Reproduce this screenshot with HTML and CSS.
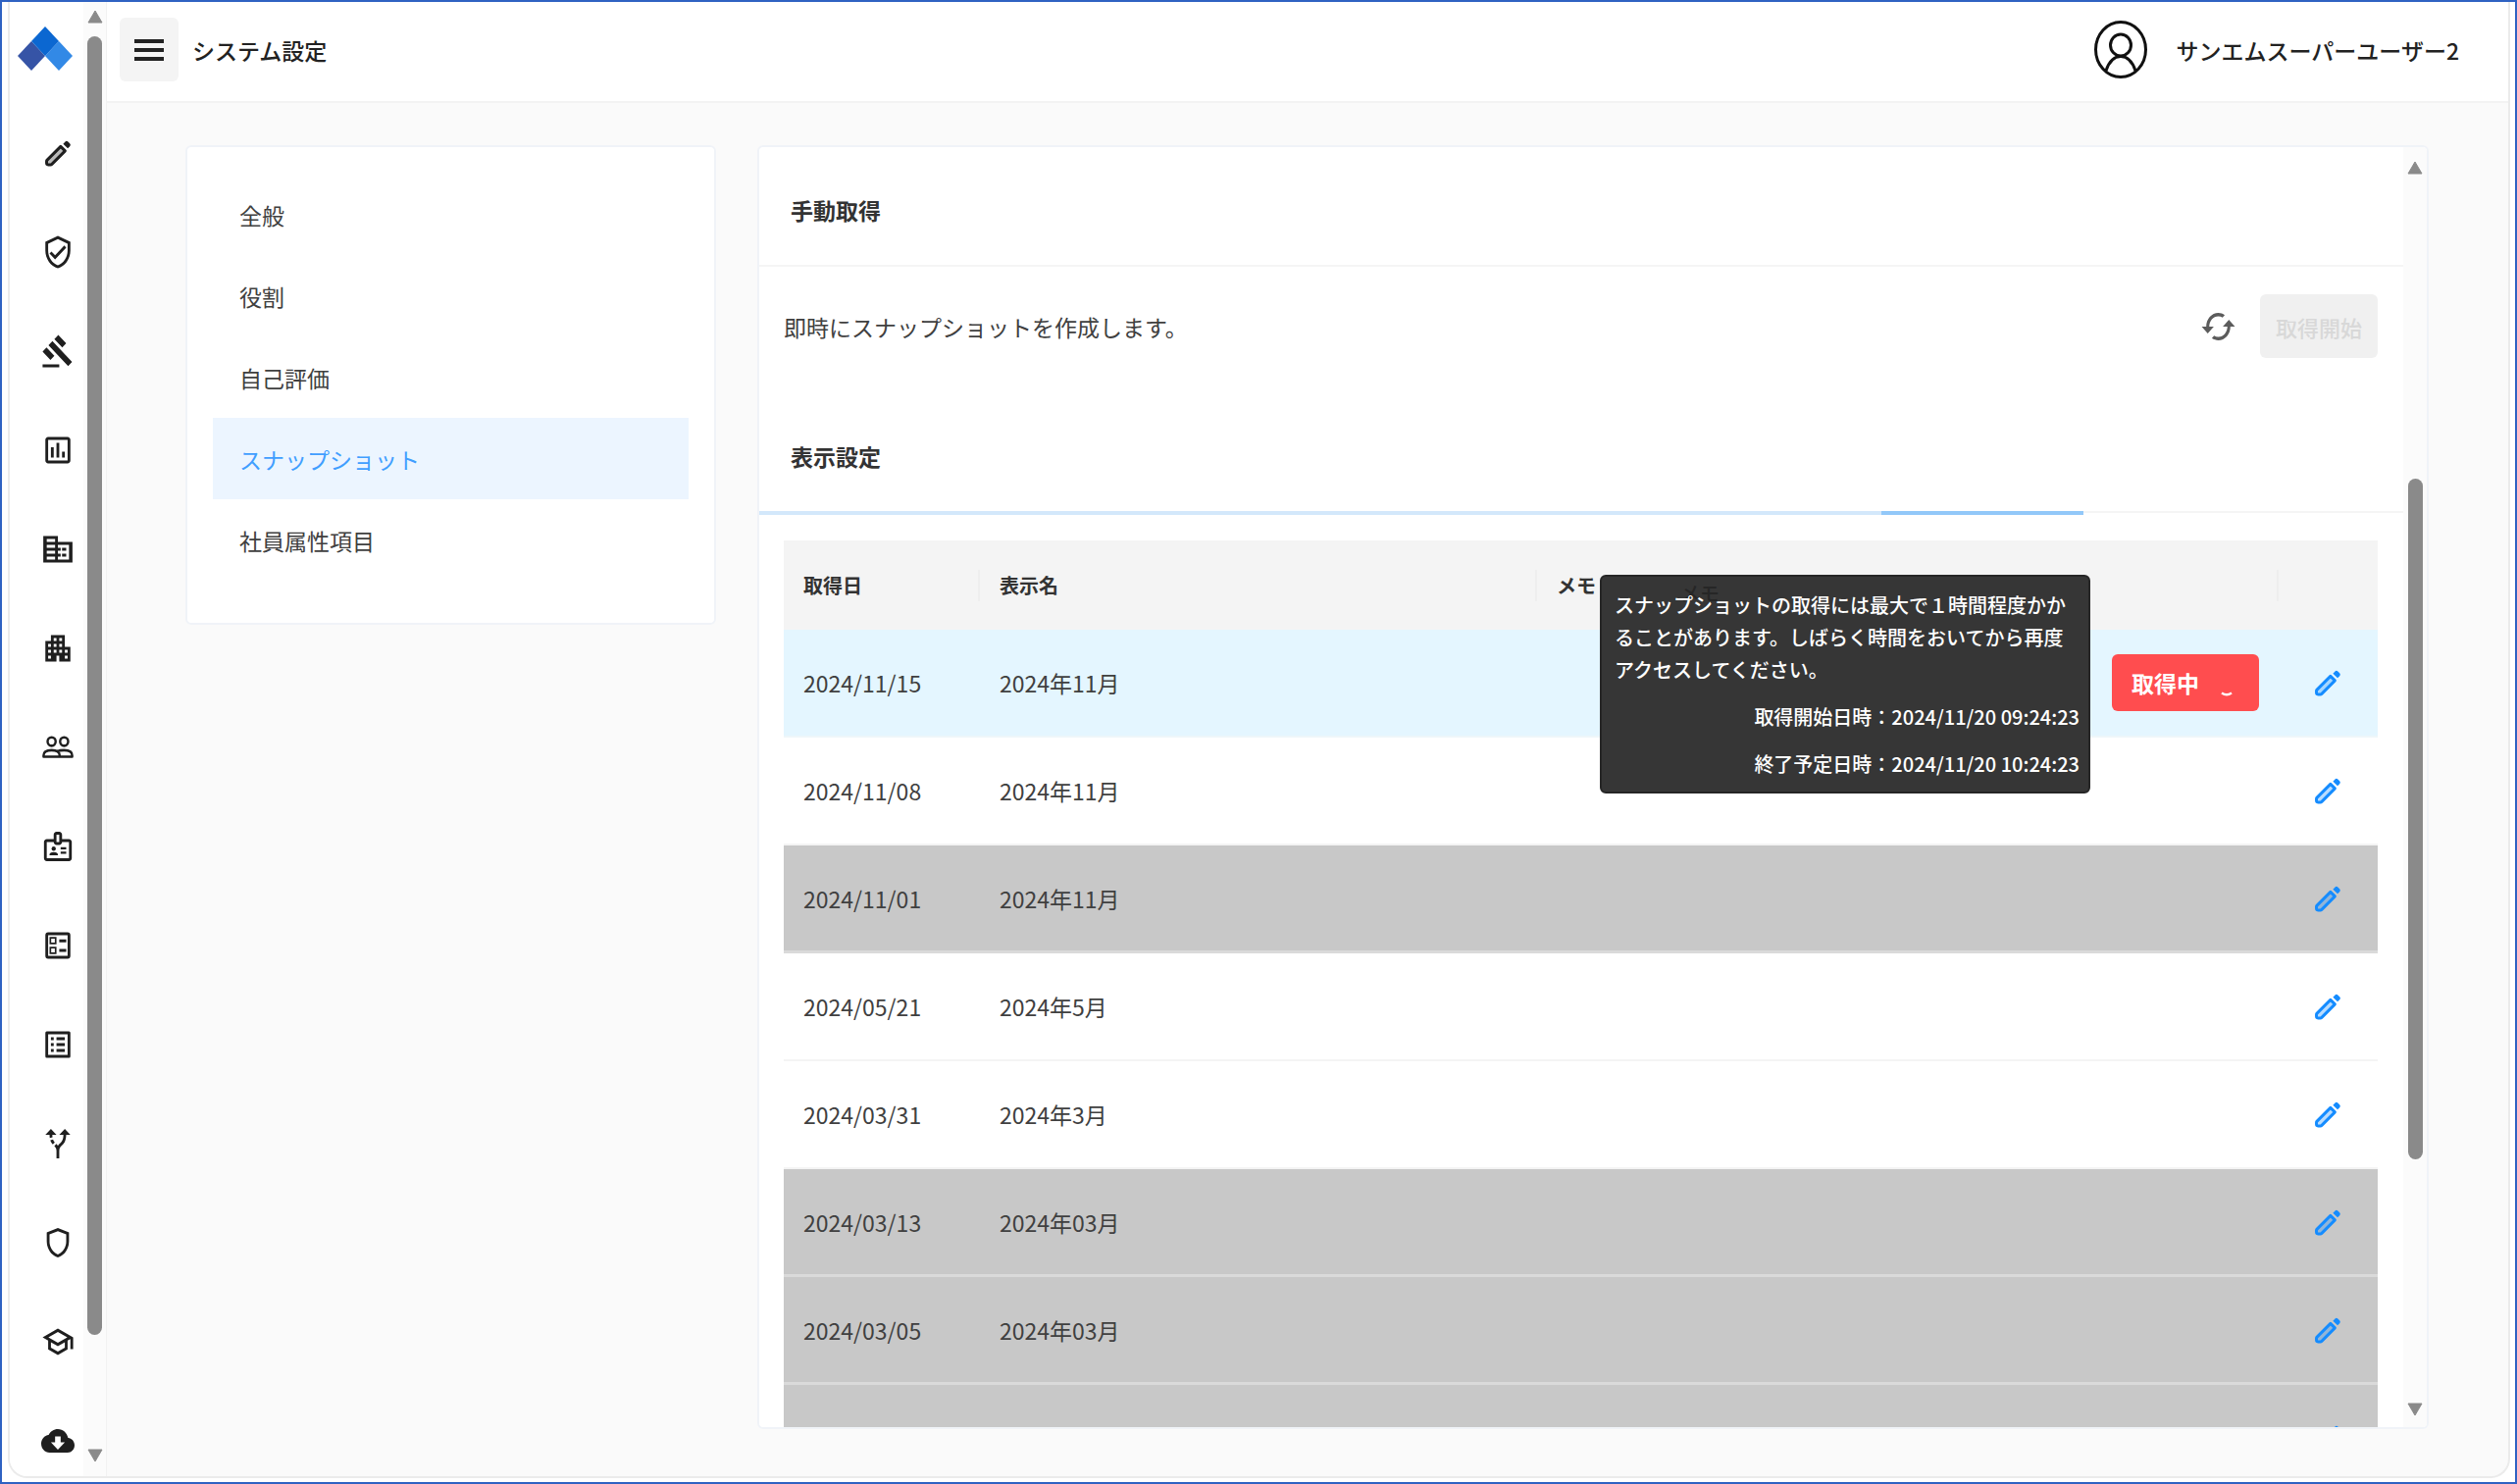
FILE: index.html
```html
<!DOCTYPE html>
<html lang="ja">
<head>
<meta charset="utf-8">
<meta name="viewport" content="width=device-width, initial-scale=1">
<title>システム設定</title>
<link rel="stylesheet" href="styles.css">
</head>
<body>
<svg class="sprite" aria-hidden="true">
  <symbol id="pencil" viewBox="0 0 24 24">
    <path d="M4.3 17 14 7.300 17.200 10.500 7.700 20Q7.300 20.400 6.700 20.400H5Q3.900 20.400 3.900 19.300V18Q3.900 17.400 4.300 17Z" fill="currentColor" fill-opacity=".3" stroke="currentColor" stroke-width="2.100" stroke-linejoin="round"/>
    <path d="M15.800 5.400 17.300 3.900Q18.300 2.900 19.300 3.900L20.600 5.200Q21.600 6.200 20.600 7.200L19.100 8.700Z" fill="currentColor"/>
  </symbol>
</svg>
<div class="frame">
  <div class="app">
    <aside class="sidebar">
      <nav class="rail" aria-label="メインメニュー">
        <a class="logo" href="#" aria-label="ホーム">
          <svg width="56" height="45" viewBox="0 0 56 45"><path d="M14 15 28 30 14 45 0 30Z" fill="#3654a6"/><path d="M42 15 56 30 42 45 28 30Z" fill="#3289e6"/><path d="M28 0 42 15 28 30 14 15Z" fill="#0b67d1"/></svg>
        </a>
        <a class="rail-link" href="#" aria-label="編集"><svg class="icon"><use href="#pencil"/></svg></a>
        <a class="rail-link" href="#" aria-label="認証"><svg class="icon" viewBox="0 0 24 24" preserveAspectRatio="none"><path d="M12 1L3 5v6c0 5.550 3.840 10.740 9 12 5.160-1.260 9-6.450 9-12V5l-9-4zm7 10c0 4.520-2.980 8.690-7 9.930-4.020-1.240-7-5.410-7-9.930V6.300l7-3.110 7 3.110V11zM7.410 11.590L6 13l4 4 8-8-1.410-1.420L10 14.170z"/></svg></a>
        <a class="rail-link" href="#" aria-label="規則"><svg class="icon" viewBox="0 0 24 24" preserveAspectRatio="none"><path d="M1 21h12v2H1zM5.245 8.070l2.830-2.827 14.140 14.142-2.828 2.828zM12.317 1l5.657 5.656-2.830 2.830-5.654-5.660zM3.825 9.485l5.657 5.657-2.828 2.828-5.657-5.657z"/></svg></a>
        <a class="rail-link" href="#" aria-label="レポート"><svg class="icon" viewBox="0 0 24 24" preserveAspectRatio="none"><path d="M19 3H5c-1.100 0-2 .9-2 2v14c0 1.100.9 2 2 2h14c1.100 0 2-.9 2-2V5c0-1.100-.9-2-2-2zm0 16H5V5h14v14zM7 10h2v7H7zm4-3h2v10h-2zm4 6h2v4h-2z"/></svg></a>
        <a class="rail-link" href="#" aria-label="会社"><svg class="icon" viewBox="0 0 24 24" preserveAspectRatio="none"><path fill-rule="evenodd" d="M12 7V3H1.500v18H22.500V7zM4 17h6v2H4zM4 13h6v2H4zM4 9h6v2H4zM4 5h6v2H4zM12 9h8v10h-8v-2h2v-2h-2v-2h2v-2h-2zM18 11h-3v2h3zM18 15h-3v2h3z"/></svg></a>
        <a class="rail-link" href="#" aria-label="事業所"><svg class="icon" viewBox="0 0 24 24" preserveAspectRatio="none"><path d="M17 11V3H7v4H3v14h8v-4h2v4h8V11h-4zM7 19H5v-2h2v2zm0-4H5v-2h2v2zm0-4H5V9h2v2zm4 4H9v-2h2v2zm0-4H9V9h2v2zm0-4H9V5h2v2zm4 8h-2v-2h2v2zm0-4h-2V9h2v2zm0-4h-2V5h2v2zm4 12h-2v-2h2v2zm0-4h-2v-2h2v2z"/></svg></a>
        <a class="rail-link" href="#" aria-label="社員"><svg class="icon" viewBox="0 0 24 24" preserveAspectRatio="none"><g fill="none" stroke="currentColor" stroke-width="1.700" stroke-linejoin="round"><circle cx="7.500" cy="8" r="2.900"/><circle cx="16.500" cy="8" r="2.900"/><path d="M1.700 18.300V17.500Q1.700 13.900 7.500 13.900T13.300 17.500V18.300ZM11.500 14.800Q13.300 13.900 16.500 13.900 22.300 13.900 22.300 17.500V18.300H13.300"/></g></svg></a>
        <a class="rail-link" href="#" aria-label="社員証"><svg class="icon" viewBox="0 0 24 24" preserveAspectRatio="none"><path fill-rule="evenodd" d="M20 7h-5V4c0-1.100-.9-2-2-2h-2c-1.100 0-2 .9-2 2v3H4c-1.100 0-2 .9-2 2v11c0 1.100.9 2 2 2h16c1.100 0 2-.9 2-2V9c0-1.100-.9-2-2-2zm-9-3h2v5h-2V4zm9 16H4V9h5c0 1.100.9 2 2 2h2c1.100 0 2-.9 2-2h5v11z"/><circle cx="9" cy="13.500" r="1.500"/><path d="M6 18v-.5q0-1.700 3-1.700t3 1.700v.5zM14 12.500h4V14h-4zM14 15.500h4V17h-4z"/></svg></a>
        <a class="rail-link" href="#" aria-label="アンケート"><svg class="icon" viewBox="0 0 24 24" preserveAspectRatio="none"><path fill-rule="evenodd" d="M5 3h14q2 0 2 2v14q0 2-2 2H5q-2 0-2-2V5q0-2 2-2zM5 5v14h14V5zM6 6.200h5v5H6zM7.200 7.400v2.600h2.600V7.400zM6 12.800h5v5H6zM7.200 14v2.600h2.600V14zM13 7.800h5v2h-5zM13 14.400h5v2h-5z"/></svg></a>
        <a class="rail-link" href="#" aria-label="一覧"><svg class="icon" viewBox="0 0 24 24" preserveAspectRatio="none"><path fill-rule="evenodd" d="M4 3h16q1 0 1 1v16q0 1-1 1H4q-1 0-1-1V4q0-1 1-1zM5 5v14h14V5zM7 7h2v2H7zM11 7h6v2h-6zM7 11h2v2H7zM11 11h6v2h-6zM7 15h2v2H7zM11 15h6v2h-6z"/></svg></a>
        <a class="rail-link" href="#" aria-label="経路"><svg class="icon" viewBox="0 0 24 24" preserveAspectRatio="none"><path d="m9.780 11.160-1.420 1.420c-.68-.69-1.340-1.580-1.790-2.940l1.940-.49c.32.89.77 1.500 1.270 2.010zM11 6 7 2 3 6h3.020c.02.81.08 1.540.19 2.170l1.940-.49C8.080 7.200 8.030 6.630 8.020 6H11zm10 0-4-4-4 4h2.990c-.1 3.680-1.280 4.750-2.540 5.880-.5.44-1.010.92-1.450 1.550-.34-.49-.73-.88-1.130-1.240L9.460 13.600C10.390 14.450 11 15.140 11 17v5h2v-5c0-2.020.71-2.660 1.790-3.630 1.380-1.240 3.080-2.780 3.200-7.370H21z"/></svg></a>
        <a class="rail-link" href="#" aria-label="権限"><svg class="icon" viewBox="0 0 24 24" preserveAspectRatio="none"><path d="M12 2 4 5v6.090c0 5.050 3.410 9.760 8 10.910 4.590-1.150 8-5.860 8-10.910V5l-8-3zm6 9.090c0 4-2.550 7.700-6 8.830-3.450-1.130-6-4.820-6-8.830v-4.700l6-2.250 6 2.250v4.700z"/></svg></a>
        <a class="rail-link" href="#" aria-label="研修"><svg class="icon" viewBox="0 0 24 24" preserveAspectRatio="none"><path d="M12 3 1 9l4 2.180v6L12 21l7-3.820v-6l2-1.090V17h2V9L12 3zm6.820 6L12 12.720 5.180 9 12 5.280 18.820 9zM17 15.990l-5 2.730-5-2.730v-3.720L12 15l5-2.730v3.720z"/></svg></a>
        <a class="rail-link" href="#" aria-label="ダウンロード"><svg class="icon" viewBox="0 0 24 24" preserveAspectRatio="none"><path d="M19.350 10.040C18.670 6.590 15.640 4 12 4 9.110 4 6.600 5.640 5.350 8.040 2.340 8.360 0 10.910 0 14c0 3.310 2.690 6 6 6h13c2.760 0 5-2.240 5-5 0-2.640-2.050-4.780-4.650-4.960zM17 13l-5 5-5-5h3V9h4v4h3z"/></svg></a>
      </nav>
      <div class="scrollbar scrollbar-rail" aria-hidden="true">
        <svg class="arrow" viewBox="0 0 16 14"><path d="M8 1 15 13H1Z"/></svg>
        <span class="before"></span><span class="thumb"></span><span class="after"></span>
        <svg class="arrow" viewBox="0 0 16 14"><path d="M8 13 15 1H1Z"/></svg>
      </div>
    </aside>

    <header class="topbar">
      <button class="menu-button" type="button" aria-label="メニュー"><span></span><span></span><span></span></button>
      <h1 class="page-title">システム設定</h1>
      <svg class="avatar" viewBox="0 0 54 59" aria-hidden="true"><g fill="none" stroke="#111" stroke-width="3"><ellipse cx="27" cy="29.500" rx="25.500" ry="28"/><ellipse cx="27" cy="25" rx="10.500" ry="11"/><path d="M12 51Q17 36.500 27 36.500T42 51"/></g></svg>
      <span class="user-name">サンエムスーパーユーザー2</span>
    </header>

    <main class="content">
      <nav class="card settings-nav" aria-label="設定メニュー">
        <a href="#">全般</a>
        <a href="#">役割</a>
        <a href="#">自己評価</a>
        <a class="active" href="#" aria-current="page">スナップショット</a>
        <a href="#">社員属性項目</a>
      </nav>

      <section class="card panel">
        <div class="panel-body">
          <h2 class="section-title">手動取得</h2>
          <div class="manual">
            <p>即時にスナップショットを作成します。</p>
            <button class="refresh" type="button" aria-label="更新"><svg width="37" height="42" viewBox="0 0 24 24" preserveAspectRatio="none"><path d="m19 8-4 4h3c0 3.310-2.690 6-6 6-1.010 0-1.970-.25-2.800-.7l-1.460 1.460C8.970 19.540 10.430 20 12 20c4.420 0 8-3.580 8-8h3l-4-4zM6 12c0-3.310 2.690-6 6-6 1.010 0 1.970.25 2.800.7l1.460-1.460C15.030 4.460 13.570 4 12 4c-4.420 0-8 3.580-8 8H1l4 4 4-4H6z"/></svg></button>
            <button class="start" type="button" disabled>取得開始</button>
          </div>
          <h2 class="section-title with-progress">表示設定<span class="progress" aria-hidden="true"><i class="done"></i><i class="running"></i><i class="rest"></i></span></h2>
          <table class="snapshots">
            <colgroup><col class="col-date"><col class="col-name"><col><col class="col-state"><col class="col-edit"></colgroup>
            <thead>
              <tr><th class="sep">取得日</th><th class="sep">表示名</th><th>メモ</th><th class="sep"></th><th></th></tr>
            </thead>
            <tbody>
              <tr class="current"><td>2024/11/15</td><td>2024年11月</td><td></td>
                <td>
                  <div class="state">
                    <button class="running-button" type="button" aria-describedby="snapshot-tip">取得中<svg width="12" height="6" viewBox="0 0 12 6" aria-hidden="true"><path d="M1 1.500Q6 5 11 1.500" fill="none" stroke="#fff" stroke-width="2.500"/></svg></button>
                    <div class="tooltip" id="snapshot-tip" role="tooltip">
                      <span class="ghost" aria-hidden="true">メモ</span>
                      <p>スナップショットの取得には最大で１時間程度かかることがあります。しばらく時間をおいてから再度アクセスしてください。</p>
                      <p class="time">取得開始日時：2024/11/20 09:24:23</p>
                      <p class="time">終了予定日時：2024/11/20 10:24:23</p>
                    </div>
                  </div>
                </td>
                <td><button class="edit" type="button" aria-label="編集"><svg class="icon"><use href="#pencil"/></svg></button></td></tr>
              <tr><td>2024/11/08</td><td>2024年11月</td><td></td><td></td><td><button class="edit" type="button" aria-label="編集"><svg class="icon"><use href="#pencil"/></svg></button></td></tr>
              <tr class="hidden-row"><td>2024/11/01</td><td>2024年11月</td><td></td><td></td><td><button class="edit" type="button" aria-label="編集"><svg class="icon"><use href="#pencil"/></svg></button></td></tr>
              <tr><td>2024/05/21</td><td>2024年5月</td><td></td><td></td><td><button class="edit" type="button" aria-label="編集"><svg class="icon"><use href="#pencil"/></svg></button></td></tr>
              <tr><td>2024/03/31</td><td>2024年3月</td><td></td><td></td><td><button class="edit" type="button" aria-label="編集"><svg class="icon"><use href="#pencil"/></svg></button></td></tr>
              <tr class="hidden-row"><td>2024/03/13</td><td>2024年03月</td><td></td><td></td><td><button class="edit" type="button" aria-label="編集"><svg class="icon"><use href="#pencil"/></svg></button></td></tr>
              <tr class="hidden-row"><td>2024/03/05</td><td>2024年03月</td><td></td><td></td><td><button class="edit" type="button" aria-label="編集"><svg class="icon"><use href="#pencil"/></svg></button></td></tr>
              <tr class="hidden-row"><td>2024/03/01</td><td>2024年03月</td><td></td><td></td><td><button class="edit" type="button" aria-label="編集"><svg class="icon"><use href="#pencil"/></svg></button></td></tr>
            </tbody>
          </table>
        </div>
        <div class="scrollbar scrollbar-panel" aria-hidden="true">
          <svg class="arrow" viewBox="0 0 16 14"><path d="M8 1 15 13H1Z"/></svg>
          <span class="before"></span><span class="thumb"></span><span class="after"></span>
          <svg class="arrow" viewBox="0 0 16 14"><path d="M8 13 15 1H1Z"/></svg>
        </div>
      </section>
    </main>
  </div>
</div>
</body>
</html>
```

FILE: styles.css
```css
* {
  box-sizing: border-box;
}

body {
  margin: 0;
  font-family: "Noto Sans CJK JP", sans-serif;
  font-size: 23px;
  line-height: 34px;
  color: #404040;
  background: #fff;
}

h1, h2, p {
  margin: 0;
}

a {
  color: inherit;
  text-decoration: none;
}

button {
  margin: 0;
  padding: 0;
  border: 0;
  background: none;
  font: inherit;
  color: inherit;
}

.sprite {
  position: absolute;
  width: 0;
  height: 0;
}

.icon {
  display: block;
  width: 34px;
  height: 36px;
  fill: currentColor;
}

/* Window frame */
.frame {
  height: 100vh;
  padding: 0 5px 4px 6px;
  border: 2px solid #2f62c2;
}

.app {
  display: grid;
  grid-template-columns: 99px minmax(0, 1fr);
  grid-template-rows: 103px minmax(0, 1fr);
  height: 100%;
  overflow: hidden;
  border: 2px solid #ebebeb;
  border-top: 0;
  border-radius: 0 0 20px 20px;
  background: #fafafa;
}

/* Icon rail */
.sidebar {
  grid-row: 1 / 3;
  display: flex;
  min-height: 0;
  border-right: 1px solid #f2f2f2;
  background: #fff;
}

.rail {
  flex: 1;
  overflow: hidden;
  color: #1f1f1f;
}

.logo {
  display: block;
  height: 103px;
  padding: 25px 0 0 8px;
}

.rail-link {
  display: flex;
  align-items: center;
  height: 101px;
  padding-left: 32px;
}

/* Scrollbars */
.scrollbar {
  display: flex;
  flex-direction: column;
  align-items: center;
  background: #fbfbfb;
}

.scrollbar-rail {
  width: 23px;
  padding: 8px 0 14px;
}

.scrollbar-panel {
  width: 24px;
  padding: 14px 0 11px;
}

.arrow {
  display: block;
  flex: none;
  width: 16px;
  height: 14px;
  fill: #8a8a8a;
  stroke: #8a8a8a;
  stroke-width: 1px;
  stroke-linejoin: round;
}

.thumb {
  width: 15px;
  border-radius: 8px;
  background: #8a8a8a;
}

.scrollbar-rail .before { flex: 13; }
.scrollbar-rail .thumb { flex: 1323; }
.scrollbar-rail .after { flex: 116; }
.scrollbar-panel .before { flex: 310; }
.scrollbar-panel .thumb { flex: 693; }
.scrollbar-panel .after { flex: 248; }

/* Top bar */
.topbar {
  display: flex;
  align-items: center;
  padding: 0 50px 4px 13px;
  border-bottom: 2px solid #f3f3f3;
  background: #fff;
  color: #222;
}

.menu-button {
  display: flex;
  flex-direction: column;
  align-items: center;
  justify-content: center;
  gap: 5px;
  width: 60px;
  height: 65px;
  border-radius: 6px;
  background: #f4f4f4;
}

.menu-button span {
  width: 30px;
  height: 4px;
  background: #222;
}

.page-title {
  margin-left: 14px;
  font-size: 23px;
  font-weight: 500;
}

.avatar {
  width: 54px;
  height: 59px;
  margin-left: auto;
}

.user-name {
  margin-left: 30px;
  font-weight: 500;
}

/* Content */
.content {
  display: grid;
  grid-template-columns: 541px minmax(0, 1fr);
  grid-template-rows: minmax(0, 1fr);
  gap: 42px;
  padding: 43px 81px 48px 80px;
}

.card {
  overflow: hidden;
  border: 2px solid #f0f3f8;
  border-radius: 6px;
  background: #fff;
}

.settings-nav {
  align-self: start;
  padding: 27px 26px 43px;
}

.settings-nav a {
  display: flex;
  align-items: center;
  height: 83px;
  padding-left: 27px;
}

.settings-nav .active {
  background: #ecf5ff;
  color: #409eff;
}

.panel {
  display: flex;
}

.panel-body {
  flex: 1;
  min-width: 0;
  overflow: hidden;
}

.section-title {
  display: flex;
  align-items: center;
  height: 122px;
  padding: 8px 32px 0;
  border-bottom: 2px solid #f5f5f5;
  font-size: 23px;
  font-weight: 700;
  color: #333;
}

.manual {
  display: flex;
  align-items: center;
  padding: 28px 26px 36px 25px;
}

.manual p {
  flex: 1;
}

.refresh {
  display: block;
  margin-right: 24px;
}

.refresh svg {
  display: block;
  fill: #5c5c5c;
}

.start {
  width: 120px;
  height: 65px;
  border-radius: 6px;
  background: #f0f0f0;
  font-size: 22px;
  font-weight: 500;
  color: #d8d8d8;
}

.with-progress {
  position: relative;
}

.progress {
  position: absolute;
  left: 0;
  right: 0;
  bottom: -4px;
  display: flex;
  height: 4px;
}

.done {
  flex: 1144;
  background: #d3e8fb;
}

.running {
  flex: 206;
  background: #92c8f9;
}

.rest {
  flex: 326;
}

/* Snapshot table */
.snapshots {
  width: calc(100% - 51px);
  margin: 28px 26px 0 25px;
  border-spacing: 0;
  table-layout: fixed;
}

.col-date { width: 200px; }
.col-name { width: 568px; }
.col-state { width: 190px; }
.col-edit { width: 101px; }

th {
  height: 91px;
  padding: 0 20px;
  background: #f4f4f4;
  font-size: 20px;
  font-weight: 700;
  text-align: left;
  color: #333;
}

th.sep {
  background: linear-gradient(#eeeeee, #eeeeee) right center / 2px 32px no-repeat #f4f4f4;
}

td {
  height: 110px;
  padding: 0 20px;
  border-bottom: 2px solid #f4f4f4;
}

.current td {
  border-bottom-color: #eef6fa;
  background: #e4f6ff;
}

.hidden-row td {
  border-bottom: 3px solid #dadada;
  background: #c8c8c8;
}

td:last-child {
  padding: 0 33px;
}

.edit {
  display: block;
  color: #158cff;
}

.state {
  position: relative;
}

.running-button {
  display: flex;
  align-items: center;
  gap: 22px;
  width: 150px;
  height: 58px;
  padding-left: 20px;
  border-radius: 6px;
  background: #ff4d4f;
  font-weight: 700;
  color: #fff;
}

.running-button svg {
  margin-top: 24px;
}

.tooltip {
  position: absolute;
  top: -81px;
  right: 172px;
  width: 500px;
  padding: 12px 9px 12px 13px;
  border: 2px solid #262626;
  border-radius: 6px;
  background: #363636;
  font-size: 20px;
  font-weight: 500;
  line-height: 33px;
  color: #fff;
}

.tooltip p {
  position: relative;
}

.tooltip .time {
  margin-top: 15px;
  text-align: right;
}

.ghost {
  position: absolute;
  top: 0;
  left: 80px;
  color: #262626;
}
```
